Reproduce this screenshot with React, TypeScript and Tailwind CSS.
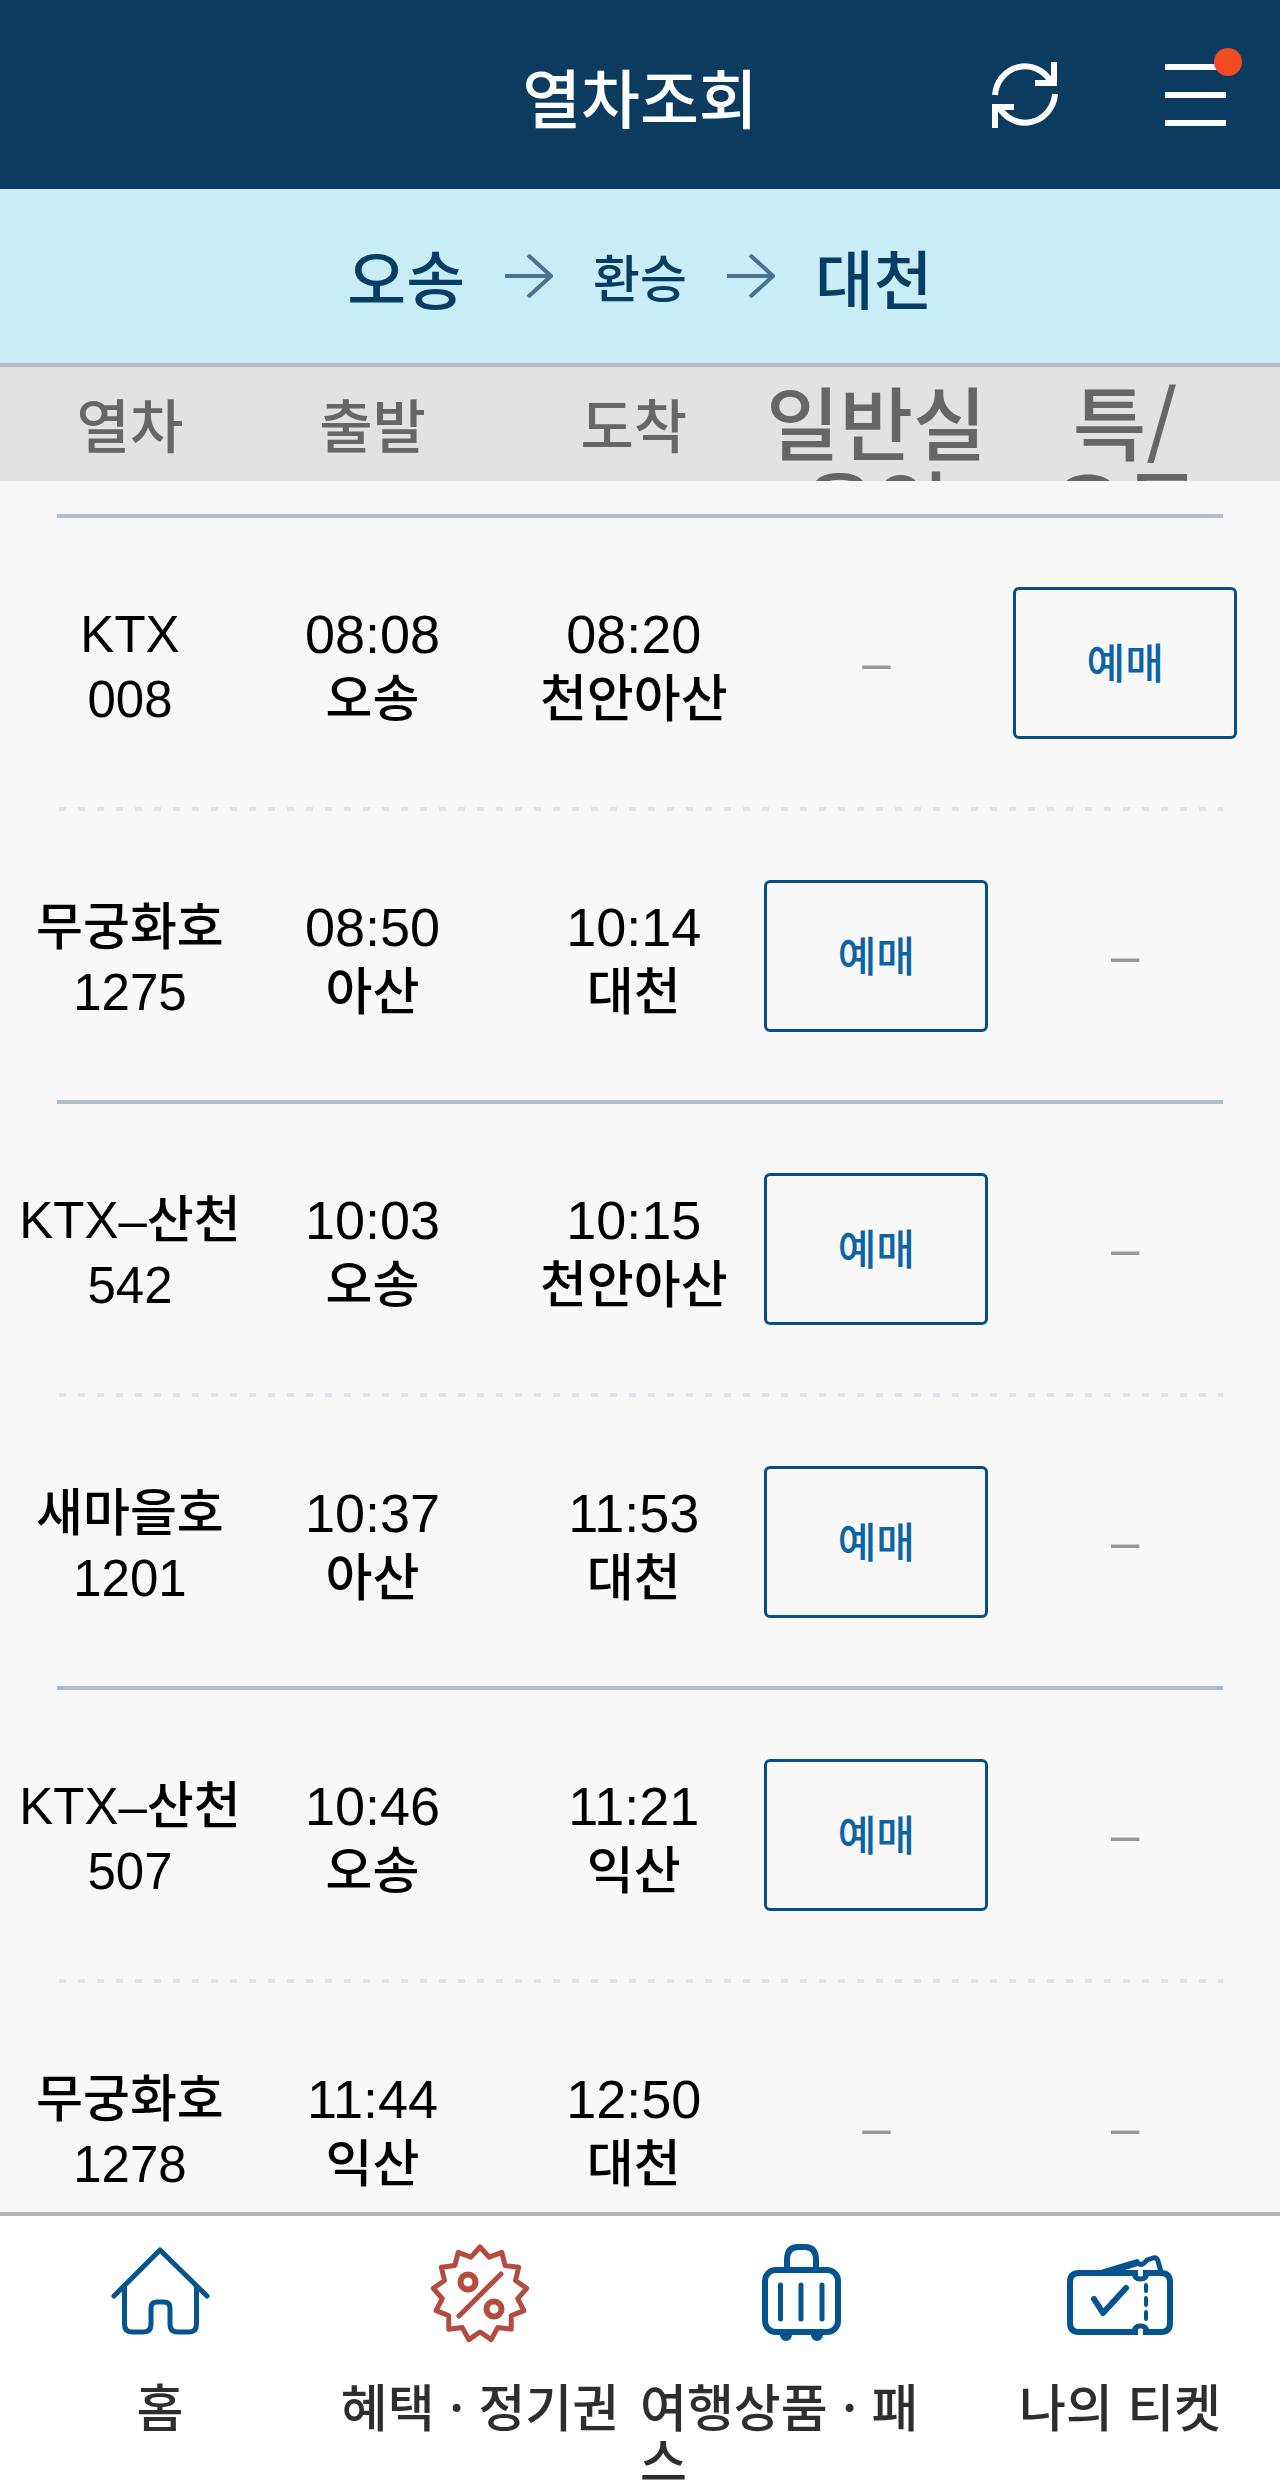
import React from 'react';

interface Stop {
  time: string;
  station: string;
}

interface Train {
  name: string;
  number: string;
  from: Stop;
  to: Stop;
  general: boolean;
  first: boolean;
}

const trains: Train[] = [
  { name: 'KTX', number: '008', from: { time: '08:08', station: '오송' }, to: { time: '08:20', station: '천안아산' }, general: false, first: true },
  { name: '무궁화호', number: '1275', from: { time: '08:50', station: '아산' }, to: { time: '10:14', station: '대천' }, general: true, first: false },
  { name: 'KTX–산천', number: '542', from: { time: '10:03', station: '오송' }, to: { time: '10:15', station: '천안아산' }, general: true, first: false },
  { name: '새마을호', number: '1201', from: { time: '10:37', station: '아산' }, to: { time: '11:53', station: '대천' }, general: true, first: false },
  { name: 'KTX–산천', number: '507', from: { time: '10:46', station: '오송' }, to: { time: '11:21', station: '익산' }, general: true, first: false },
  { name: '무궁화호', number: '1278', from: { time: '11:44', station: '익산' }, to: { time: '12:50', station: '대천' }, general: false, first: false },
];

const Columns = () => (
  <colgroup>
    <col className="w-[18%]" />
    <col className="w-[21%]" />
    <col className="w-[21%]" />
    <col className="w-[18%]" />
    <col className="w-[22%]" />
  </colgroup>
);

const RouteArrow = () => (
  <svg width="48" height="44" viewBox="0 0 48 44" fill="none" stroke="#4a7391" strokeWidth="4" aria-hidden="true">
    <path d="M0 22H46M23 1L46 22L23 43" />
  </svg>
);

const RefreshIcon = () => (
  <svg width="68" height="68" viewBox="0 0 68 68" fill="none" stroke="currentColor" strokeWidth="6" aria-hidden="true">
    <path d="M4 34A30 31 0 0 1 60 21" />
    <path d="M63 1V22H44" />
    <path d="M64 33A30 31 0 0 1 8 46" />
    <path d="M4 67V46H23" />
  </svg>
);

const HomeIcon = () => (
  <svg width="100" height="100" viewBox="0 0 100 100" fill="none" stroke="#06548f" strokeWidth="5" strokeLinecap="round" strokeLinejoin="round" aria-hidden="true">
    <path d="M4 54L50 8L97 54" />
    <path d="M14.5 46V82Q14.5 90 22 90H33Q41 90 41 82V66Q41 60 47 60H54Q60 60 60 66V82Q60 90 68 90H79Q86.5 90 86.5 82V46" />
  </svg>
);

const DiscountIcon = () => {
  const points: string[] = [];
  for (let i = 0; i < 26; i++) {
    const r = i % 2 === 0 ? 47 : 38;
    const a = (Math.PI * i) / 13 - Math.PI / 2;
    points.push(`${(50 + r * Math.cos(a)).toFixed(1)},${(52 + r * Math.sin(a)).toFixed(1)}`);
  }
  return (
    <svg width="100" height="100" viewBox="0 0 100 100" fill="none" stroke="#b34c3f" strokeWidth="5" strokeLinecap="round" strokeLinejoin="round" className="overflow-visible" aria-hidden="true">
      <polygon points={points.join(' ')} />
      <path d="M29 74L71 32" />
      <circle cx="38" cy="40" r="7.5" strokeWidth="6" />
      <circle cx="64" cy="67" r="7.5" strokeWidth="6" />
    </svg>
  );
};

const LuggageIcon = () => (
  <svg width="100" height="100" viewBox="0 0 100 100" fill="none" stroke="#06548f" strokeWidth="6" strokeLinecap="round" aria-hidden="true">
    <rect x="15" y="28" width="73" height="62" rx="11" />
    <path d="M37 26V18Q37 5 48 5H55Q66 5 66 18V26" />
    <path d="M30.5 43V77M51 43V77M72 43V77" strokeWidth="5" />
    <path d="M30 93A6 6 0 0 0 42 93ZM61 93A6 6 0 0 0 73 93Z" fill="#06548f" stroke="none" />
  </svg>
);

const TicketIcon = () => (
  <svg width="110" height="100" viewBox="0 0 110 100" fill="none" stroke="#06548f" strokeWidth="6" strokeLinejoin="round" aria-hidden="true">
    {/* ticket behind */}
    <path d="M32 29L72 17L76 23L54 30Z" fill="#06548f" stroke="none" />
    <path d="M71 18Q75 27 82 18L88 16Q92 15 93 19L96 30" strokeWidth="5" />
    {/* front ticket with its two notches */}
    <path d="M73 31H14Q5 31 5 40V81Q5 90 14 90H73" />
    <path d="M78 31H96Q105 31 105 40V81Q105 90 96 90H78" />
    <path d="M69 30Q69 37 75.500 37Q82 37 82 30" strokeWidth="5" />
    <path d="M69 91Q69 84 75.500 84Q82 84 82 91" strokeWidth="5" />
    <path d="M29 57L38 71L61 46" strokeLinecap="round" />
    <path d="M81 43V49M81 56V63M81 70V77" strokeWidth="4" strokeLinecap="round" />
  </svg>
);

const tabs = [
  { label: '홈', icon: <HomeIcon /> },
  { label: '혜택 · 정기권', icon: <DiscountIcon /> },
  { label: '여행상품 · 패스', icon: <LuggageIcon /> },
  { label: '나의 티켓', icon: <TicketIcon /> },
];

const TwoLines = ({ top, bottom, big }: { top: string; bottom: string; big?: boolean }) => (
  <div className="flex flex-col items-center pt-2">
    <span className={big ? 'text-[54px]' : ''}>{top}</span>
    <span>{bottom}</span>
  </div>
);

const Seat = ({ open }: { open: boolean }) =>
  open ? (
    <button className="w-56 h-[152px] pb-1 align-middle rounded-md border-[3px] border-[#064f8a] text-[42px] text-[#0d63a5] font-medium font-['Noto_Sans_CJK_KR',sans-serif]">예매</button>
  ) : (
    <span className="text-[#999999]">–</span>
  );

const App = () => {
  return (
    <div lang="ko" className="h-screen flex flex-col bg-[#f8f8f8] text-black font-['Noto_Sans_CJK_KR',sans-serif]">
      {/* Header */}
      <header className="shrink-0 h-[189px] grid grid-cols-[1fr_auto_1fr] items-center bg-[#0b3c5f] text-white px-[54px]">
        <span />
        <h1 className="text-[64px] font-medium text-center">열차조회</h1>
        <div className="flex items-center justify-end gap-[106px]">
          <button aria-label="새로고침"><RefreshIcon /></button>
          <button aria-label="메뉴" className="relative flex flex-col gap-[22px] w-[61px]">
            <span className="h-[6px] bg-white" />
            <span className="h-[6px] bg-white" />
            <span className="h-[6px] bg-white" />
            <span className="absolute -top-4 -right-4 size-7 rounded-full bg-[#f04b23]" />
          </button>
        </div>
      </header>

      {/* Route */}
      <div className="shrink-0 h-[178px] flex items-center justify-center gap-10 bg-[#c8edf6] border-b-4 border-[#b5bcbc] text-[#063e63] font-medium">
        <span className="text-[64px]">오송</span>
        <RouteArrow />
        <span className="text-[51px]">환승</span>
        <RouteArrow />
        <span className="text-[64px]">대천</span>
      </div>

      {/* Column titles, cut off below the first line */}
      <div className="shrink-0 h-[114px] overflow-hidden bg-[#e2e2e2] px-[18px]">
        <table className="w-full table-fixed text-[#666666]">
          <Columns />
          <thead>
            <tr className="align-top text-[58px] leading-[112px]">
              <th className="font-medium">열차</th>
              <th className="font-medium">출발</th>
              <th className="font-medium">도착</th>
              <th className="font-medium text-[80px] leading-[84px] pt-2.5">일반실<br />운임</th>
              <th className="font-medium text-[80px] leading-[84px] pt-2.5">특/<br />우등</th>
            </tr>
          </thead>
        </table>
      </div>

      {/* Train list */}
      <main className="flex-1 min-h-0 overflow-hidden pt-[33px] px-[18px]">
        <table className="w-full table-fixed text-center text-[51px] leading-[65px] whitespace-nowrap font-medium font-['Liberation_Sans','Noto_Sans_CJK_KR',sans-serif]">
          <Columns />
          <tbody>
            {trains.map((train, i) => (
              <React.Fragment key={train.number}>
                <tr aria-hidden="true">
                  <td colSpan={5} className="px-[39px]">
                    {i % 2 === 0 ? (
                      <div className="h-1 bg-[#b0bcc7]" />
                    ) : (
                      <div className="h-1 bg-[repeating-linear-gradient(90deg,transparent_0_2px,#dfe5ec_2px_9px,transparent_9px_19px)]" />
                    )}
                  </td>
                </tr>
                <tr className="h-[289px]">
                  <td><TwoLines top={train.name} bottom={train.number} /></td>
                  <td><TwoLines top={train.from.time} bottom={train.from.station} big /></td>
                  <td><TwoLines top={train.to.time} bottom={train.to.station} big /></td>
                  <td><Seat open={train.general} /></td>
                  <td><Seat open={train.first} /></td>
                </tr>
              </React.Fragment>
            ))}
          </tbody>
        </table>
      </main>

      {/* Bottom tabs */}
      <nav className="shrink-0 h-[279px] grid grid-cols-4 bg-white border-t-4 border-[#b4b4b4] text-[51px] leading-[54px] font-medium text-[#2e2e2e]">
        {tabs.map((tab) => (
          <a key={tab.label} href="#" className="flex flex-col items-center pt-6.5 gap-9">
            {tab.icon}
            <span className="break-all">{tab.label}</span>
          </a>
        ))}
      </nav>
    </div>
  );
};

export default App;
